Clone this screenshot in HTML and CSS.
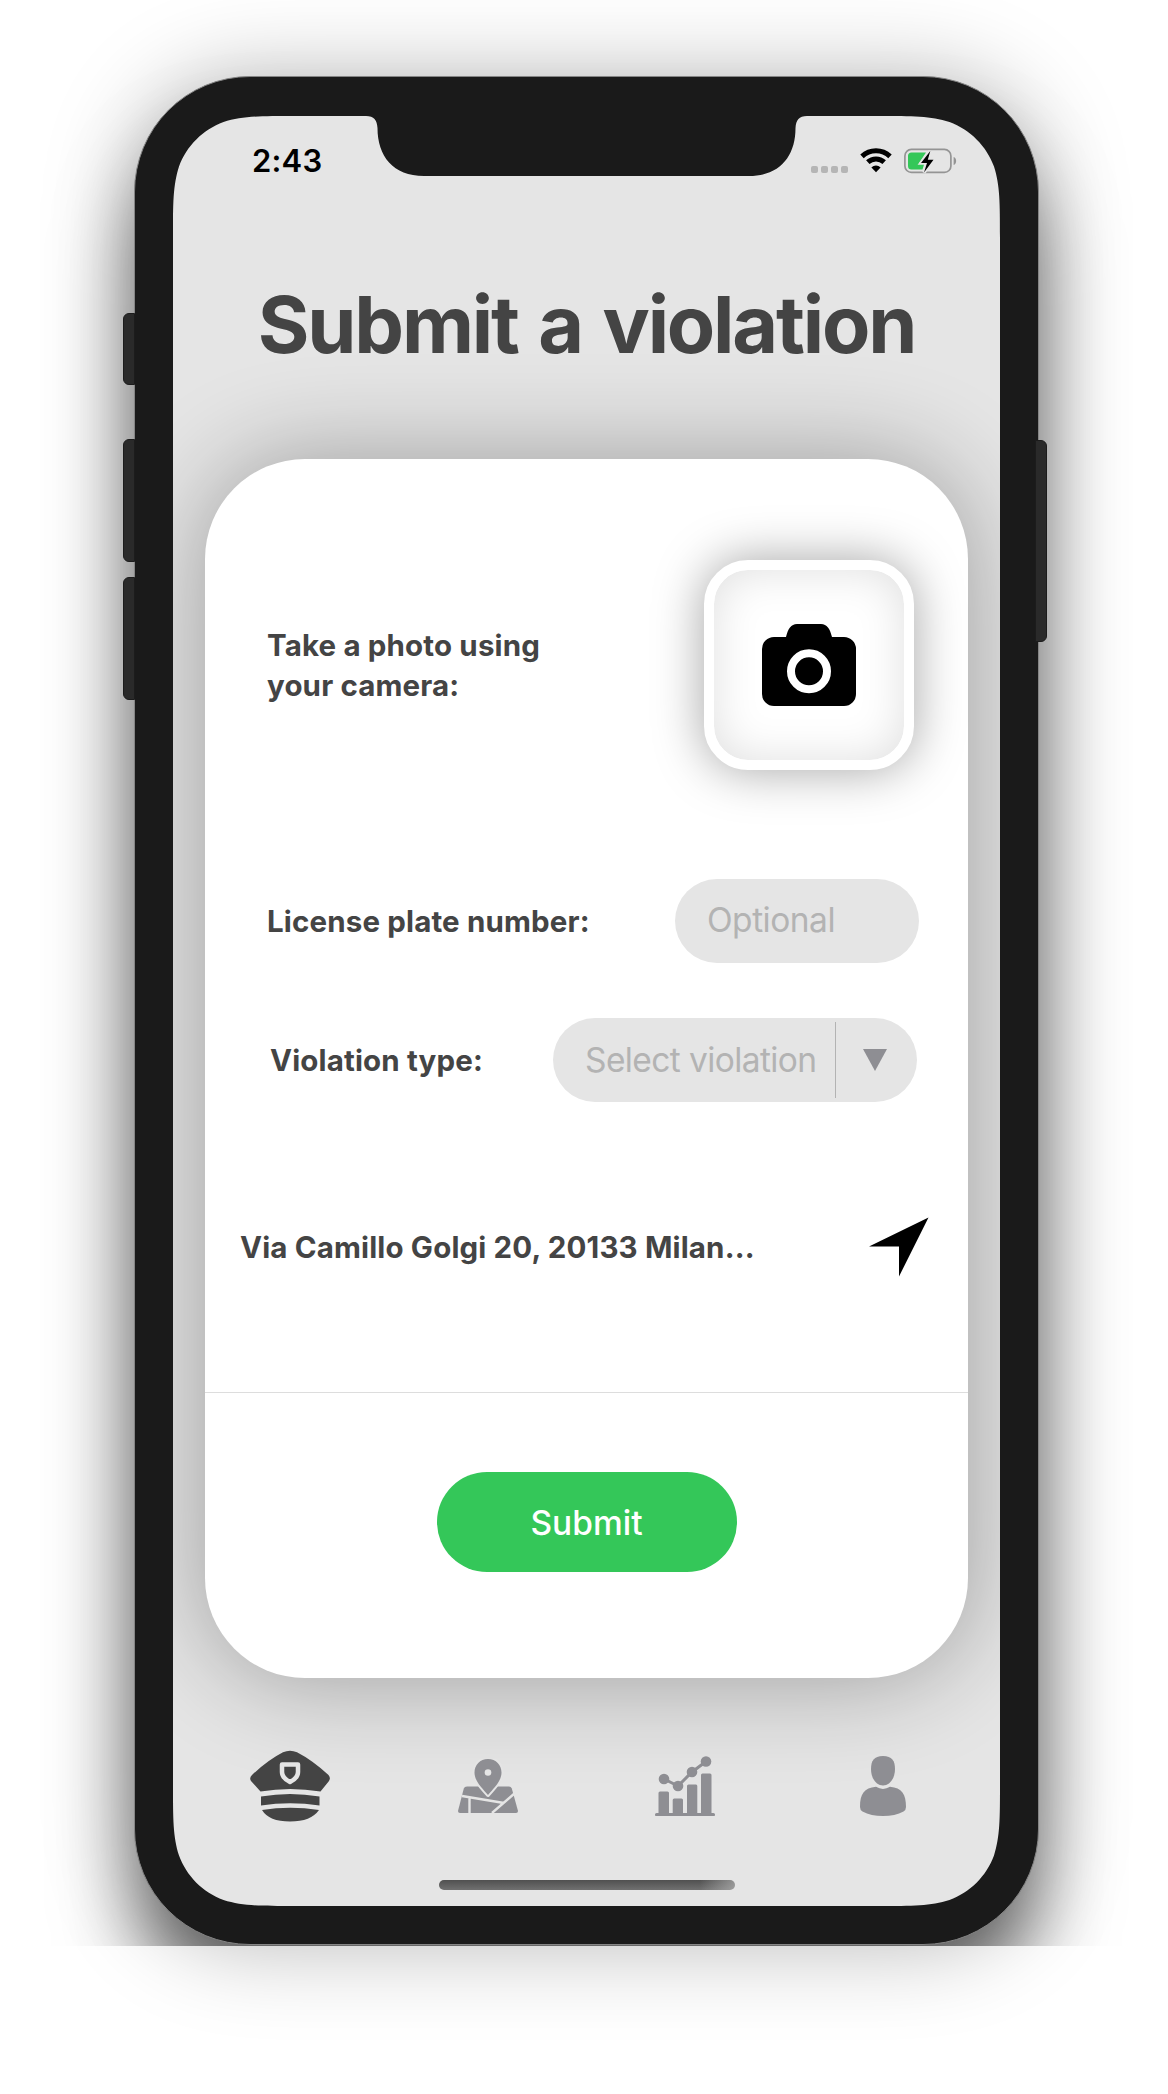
FILE: index.html
```html
<!DOCTYPE html>
<html lang="en">
<head>
<meta charset="utf-8">
<title>Submit a violation</title>
<link rel="stylesheet" href="styles.css">
</head>
<body>
<div class="stage">
  <div class="phone">
    <span class="key key-mute"></span>
    <span class="key key-up"></span>
    <span class="key key-down"></span>
    <span class="key key-power"></span>
    <main class="screen">
      <header class="status">
        <span class="time">2:43</span>
        <div class="indicators">
          <span class="dots"><i></i><i></i><i></i><i></i></span>
          <svg class="wifi" width="32" height="25" viewBox="0 0 32 25" fill="none" stroke="#000" stroke-width="5">
            <path d="M2 8.4A20.5 20.5 0 0 1 30 8.4"/>
            <path d="M7.8 14.2A12 12 0 0 1 24.2 14.2"/>
            <path d="M11.4 19.4A6.6 6.6 0 0 1 20.6 19.4L16 24.2Z" fill="#000" stroke="none"/>
          </svg>
          <svg class="battery" width="53" height="26" viewBox="0 0 53 26">
            <rect x=".9" y="1.4" width="46" height="23" rx="6.5" fill="none" stroke="#949494" stroke-width="1.7"/>
            <path d="M49.6 9c3.4 1 3.4 7 0 8z" fill="#949494"/>
            <path d="M7.5 4.5H22L15 15h5.500l-2 6.500H7.500a3.500 3.500 0 0 1-3.500-3.500V8a3.500 3.500 0 0 1 3.500-3.500Z" fill="#34c759"/>
            <path d="M26.300 3 17 15h6l-3 9.500L29.500 11.700H23.800Z" fill="#000" stroke="#e5e5e5" stroke-width="3.400" paint-order="stroke"/>
          </svg>
        </div>
      </header>
      <h1>Submit a violation</h1>
      <section class="card">
        <div class="form">
          <div class="row photo">
            <p class="label">Take a photo using<br>your camera:</p>
            <button class="camera" aria-label="Open camera">
              <svg width="94" height="82" viewBox="0 0 94 82">
                <path d="M12 13H24C26 5 29 0 35 0H59C65 0 68 5 70 13H82A12 12 0 0 1 94 25V70A12 12 0 0 1 82 82H12A12 12 0 0 1 0 70V25A12 12 0 0 1 12 13Z"/>
                <circle cx="47" cy="47.300" r="18" fill="#000" stroke="#fff" stroke-width="8"/>
              </svg>
            </button>
          </div>
          <div class="row plate">
            <p class="label">License plate number:</p>
            <div class="field optional">Optional</div>
          </div>
          <div class="row type">
            <p class="label">Violation type:</p>
            <div class="field select"><span class="value">Select violation</span><span class="toggle"><svg width="24" height="22" viewBox="0 0 24 22"><path d="M0 0H24L12 22Z" fill="#8e8e93"/></svg></span></div>
          </div>
          <div class="row place">
            <p class="label">Via Camillo Golgi 20, 20133 Milan...</p>
            <svg width="60" height="60" viewBox="0 0 60 60"><path d="M59.500.500 0 29.500H30V59.500Z"/></svg>
          </div>
        </div>
        <footer class="actions"><button class="submit">Submit</button></footer>
      </section>
      <nav class="tabs">
        <span class="tab"><svg width="80" height="72" viewBox="0 0 80 72" fill="#444">
          <path d="M2 25Q18 10 33 2.300Q40-1 47 2.300Q62 10 78.500 25Q81 28 79 31L70.500 41.500Q40 36.500 10.500 41.500L1 31Q-1 28 2 25Z"/>
          <path d="M32 14.500H48V22Q48 28 40 32Q32 28 32 22Z" fill="none" stroke="#e5e5e5" stroke-width="4.500" stroke-linejoin="round"/>
          <path d="M11 46.500Q40 41.500 69.500 46.500V55.500Q40 51 11 55.500Z"/>
          <path d="M12 60Q40 55.500 69 60Q61 71.500 40 71.500T12 60Z"/>
        </svg></span>
        <span class="tab"><svg width="60" height="54" viewBox="0 0 60 54" fill="#8e8e93">
          <path d="M9 27.500H51Q53 27.500 53.800 29.500L60 52Q60 54 58 54H2Q0 54 0 52L5.800 29.500Q6.500 27.500 9 27.500Z"/>
          <path d="M4 37 46 44M11.500 39V54M34 54 57 34" fill="none" stroke="#e5e5e5" stroke-width="2.400"/>
          <path d="M30 0C22 0 16.500 6 16.500 13.500C16.500 22 24 29 30 36C36 29 43.500 22 43.500 13.500C43.500 6 38 0 30 0Z" stroke="#e5e5e5" stroke-width="4" stroke-linejoin="round" paint-order="stroke"/>
          <circle cx="30" cy="13.500" r="3.300" fill="#e5e5e5"/>
        </svg></span>
        <span class="tab"><svg width="60" height="60" viewBox="0 0 60 60" fill="#8e8e93">
          <rect y="57" width="60" height="3.300" rx="1.600"/>
          <path d="M3.500 58V37Q3.500 35.500 5 35.500H12.500Q14 35.500 14 37V58ZM17.700 58V44Q17.700 42.500 19.200 42.500H26.500Q28 42.500 28 44V58ZM32 58V30Q32 28.500 33.500 28.500H41Q42.300 28.500 42.300 30V58ZM46 58V19Q46 17.500 47.500 17.500H55Q56.500 17.500 56.500 19V58Z"/>
          <path d="M9 23 23 30 37 16 51 5.500" fill="none" stroke="#8e8e93" stroke-width="3"/>
          <circle cx="9" cy="23" r="5.300"/><circle cx="23" cy="30" r="5.300"/><circle cx="37" cy="16" r="5.300"/><circle cx="51" cy="5.500" r="5.300"/>
        </svg></span>
        <span class="tab"><svg width="46" height="60" viewBox="0 0 46 60" fill="#8e8e93">
          <path d="M23 0C32 0 35 5 35 13C35 22 30 29.500 23 29.500S11 22 11 13C11 5 14 0 23 0Z"/>
          <path d="M16 30.800Q23 35 30 30.800C42 32 46 38 46 51Q46 54 43.500 55.500Q35 60 23 60T2.500 55.500Q0 54 0 51C0 38 4 32 16 30.800Z"/>
        </svg></span>
      </nav>
      <div class="home"></div>
    </main>
  </div>
</div>
<div class="ground"><div class="cast"></div></div>
</body>
</html>
```
FILE: styles.css
```css
* { box-sizing: border-box; }
body {
  margin: 0;
  background: #fff;
  color: #444;
  font-family: Inter, "Liberation Sans", sans-serif;
}
p, h1 { margin: 0; }
button { border: 0; padding: 0; font: inherit; }
svg { display: block; flex: none; }

/* device */
.stage { height: 1946px; padding: 76px 0 0 134px; overflow: hidden; }
.phone {
  position: relative;
  width: 905px;
  height: 1869px;
  padding: 39px 38px 0 38px;
  border: 1px solid #858585;
  border-radius: 116px;
  background: #1a1a1a;
  box-shadow: 0 0 90px rgba(0,0,0,.28), 0 65px 80px -5px rgba(0,0,0,.56);
}
.key { position: absolute; width: 12px; background: #2a2a2a; border: 1px solid #1c1c1c; border-radius: 6px 0 0 6px; left: -12px; }
.key-mute { top: 236px; height: 72px; }
.key-up { top: 362px; height: 123px; }
.key-down { top: 500px; height: 123px; }
.key-power { left: auto; right: -9px; top: 363px; height: 202px; border-radius: 0 6px 6px 0; }
.screen {
  display: flex;
  flex-direction: column;
  align-items: center;
  width: 827px;
  height: 1790px;
  background: #e5e5e5;
  clip-path: path("M0 122C0 87 0 69.500 6 50.500C13.500 30 30 13.500 50.500 6C69.500 0 87 0 122 0H193C201 0 204 4 204.500 12C204.500 40 220 60 251 60H576C607 60 622.500 40 622.500 12C623 4 626 0 634 0H705C740 0 757.500 0 776.500 6C797 13.500 813.500 30 821 50.500C827 69.500 827 87 827 122V1668C827 1703 827 1720.500 821 1739.500C813.500 1760 797 1776.500 776.500 1784C757.500 1790 740 1790 705 1790H122C87 1790 69.500 1790 50.500 1784C30 1776.500 13.500 1760 6 1739.500C0 1720.500 0 1703 0 1668Z");
}
.ground { height: 148px; overflow: hidden; }
.cast { width: 905px; height: 400px; margin: -400px 0 0 134px; border-radius: 116px; box-shadow: 0 0 90px rgba(0,0,0,.28); }

/* status bar */
.status { display: flex; justify-content: space-between; width: 100%; height: 137px; padding: 25px 43px 0 79px; color: #000; }
.time { font-size: 31px; line-height: 40px; font-weight: 600; letter-spacing: .2px; }
.indicators { display: flex; gap: 12px; padding-top: 7px; }
.dots { display: flex; gap: 3px; padding-top: 18px; }
.dots i { width: 7px; height: 7px; border-radius: 2px; background: #b5b5b5; }

h1 { height: 206px; padding-top: 23px; font-size: 79px; line-height: 96px; font-weight: 700; letter-spacing: -2.200px; word-spacing: 4px; white-space: nowrap; }

/* form card */
.card { flex: none; width: 763px; height: 1219px; border-radius: 100px; background: #fff; box-shadow: 0 0 100px rgba(0,0,0,.32); }
.form { height: 934px; padding-top: 101px; border-bottom: 1px solid #ddd; }
.row { display: flex; justify-content: space-between; align-items: center; }
.label { font-size: 29.500px; line-height: 40px; font-weight: 700; letter-spacing: .150px; white-space: nowrap; }
.photo { height: 210px; padding: 0 54px 0 62px; }
.camera {
  display: flex;
  align-items: center;
  justify-content: center;
  width: 210px;
  height: 210px;
  border: 10px solid #fff;
  border-radius: 44px;
  background: #fff;
  box-shadow: 0 0 50px rgba(0,0,0,.36), inset 0 0 45px rgba(0,0,0,.13);
}
.plate { height: 84px; margin-top: 109px; padding: 0 49px 0 62px; }
.type { height: 84px; margin-top: 55px; padding: 0 51px 0 65px; }
.field { display: flex; height: 84px; border-radius: 42px; background: #e5e5e5; color: #b3b3b3; font-size: 33.500px; line-height: 82px; white-space: nowrap; }
.optional { width: 244px; padding-left: 32px; letter-spacing: -.500px; }
.select { width: 364px; padding-left: 32px; align-items: center; }
.value { width: 250px; letter-spacing: -.600px; }
.toggle { display: flex; align-items: center; width: 82px; height: 76px; padding-left: 27px; border-left: 1px solid #b3b3b3; }
.place { height: 60px; margin-top: 115px; padding: 0 39px 0 35px; }
.actions { display: flex; justify-content: center; padding-top: 79px; }
.submit { width: 300px; height: 100px; border-radius: 50px; background: #34c759; color: #fff; font-size: 33.500px; line-height: 102px; font-weight: 500; }

/* tab bar */
.tabs { display: flex; justify-content: space-between; align-items: center; width: 100%; height: 100px; margin-top: 58px; padding: 0 77px; }
.tab { display: flex; justify-content: center; width: 80px; }
.home { width: 296px; height: 10px; margin-top: 44px; border-radius: 5px; background: linear-gradient(90deg, transparent 88%, rgba(190,190,190,.6)), linear-gradient(#505050, #707070); }
```
